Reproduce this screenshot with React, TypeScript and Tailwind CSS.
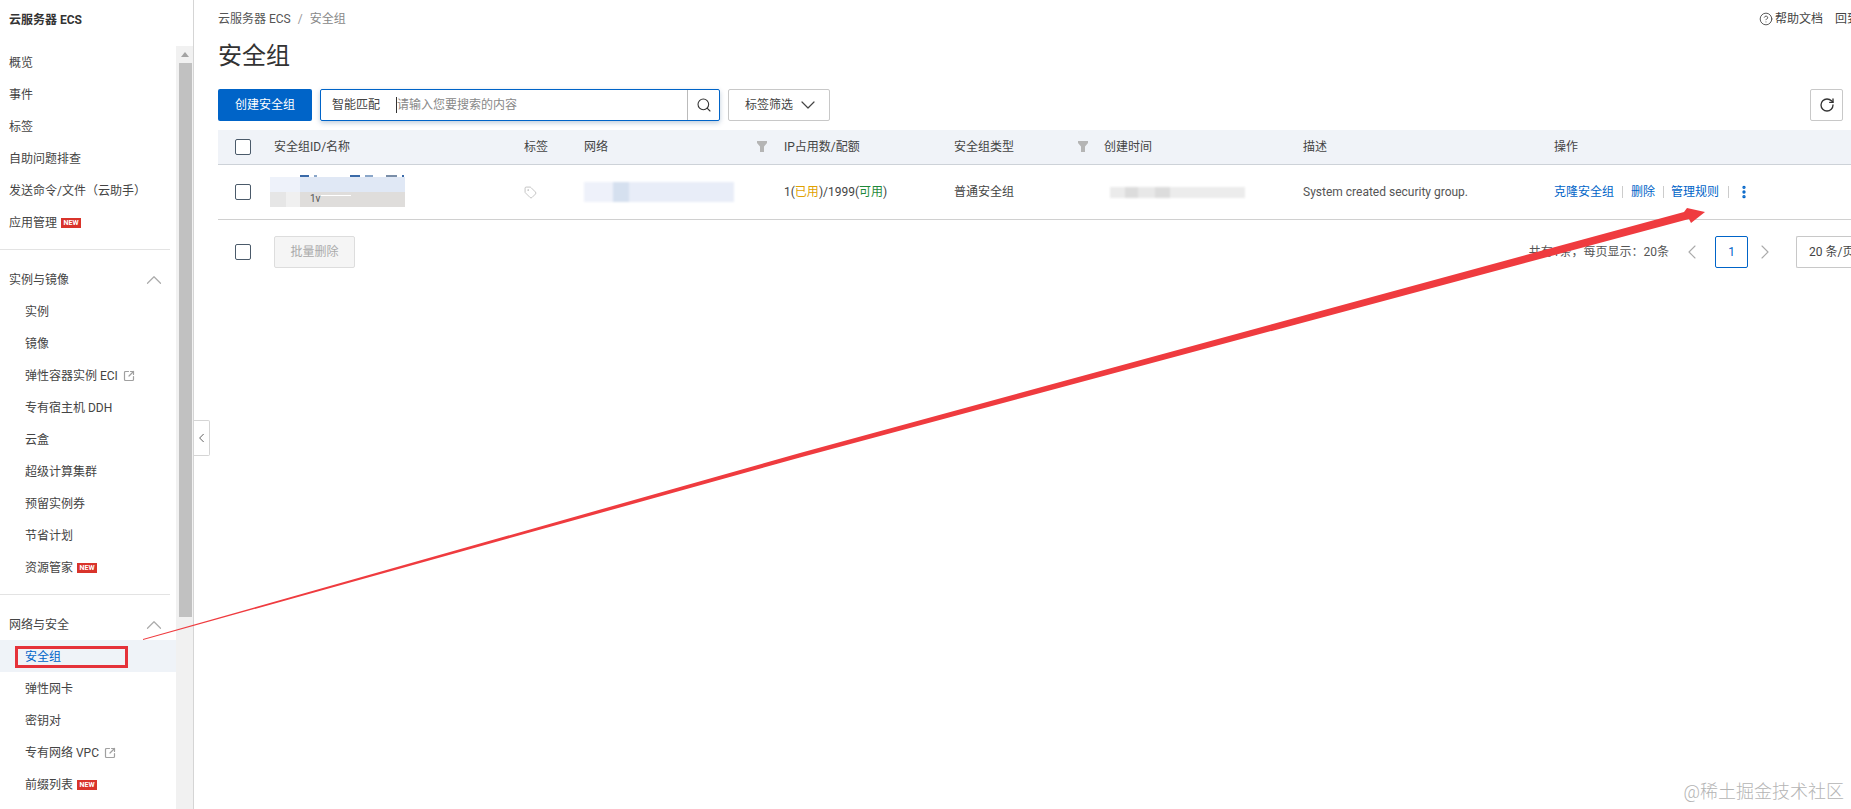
import { ChevronUp, ChevronDown, ChevronLeft, ChevronRight, Search, RotateCw, Tag, CircleHelp, SquareArrowOutUpRight, EllipsisVertical } from "lucide-react";

const Badge = () => (
  <span className="ml-[4px] inline-flex h-[10px] w-[20px] items-center justify-center bg-[#d9342b] text-[7px] font-bold leading-none text-white">NEW</span>
);
const Ext = () => <SquareArrowOutUpRight className="ml-[5px] h-[12px] w-[12px] text-[#a0a0a0]" strokeWidth={2.4} />;

function Item({ label, sub, badge, ext, active }: { label: string; sub?: boolean; badge?: boolean; ext?: boolean; active?: boolean }) {
  return (
    <div className={`flex h-[32px] items-center pt-[2px] ${sub ? "pl-[25px]" : "pl-[9px]"} ${active ? "bg-[#eff3f8] text-[#0064c8]" : "text-[#444444]"}`}>
      <span>{label}</span>
      {badge && <Badge />}
      {ext && <Ext />}
    </div>
  );
}

const Section = ({ label }: { label: string }) => (
  <div className="flex h-[32px] items-center justify-between pl-[9px] pr-[9px] pt-[2px] text-[#444444]">
    <span>{label}</span>
    <ChevronUp className="h-[26px] w-[26px] text-[#aaaaaa]" strokeWidth={1.1} />
  </div>
);

const Funnel = () => (
  <svg width="10" height="12" viewBox="0 0 10 12" className="shrink-0">
    <path d="M0 0h10v2L7 5.5V11H3V5.5L0 2z" fill="#b5b5b5" />
  </svg>
);

const Box = () => <span className="block h-[16px] w-[16px] rounded-[2px] border border-[#4a5a6a] bg-white" />;

const grid = "grid grid-cols-[56px_250px_60px_200px_170px_150px_199px_251px_1fr] items-center";

export default function App() {
  return (
    <div className="relative flex h-[809px] w-[1851px] overflow-hidden bg-white text-[12px] text-[#333333] [font-family:'Roboto','Noto_Sans_CJK_SC',sans-serif]">
      {/* sidebar */}
      <aside className="flex w-[194px] shrink-0 flex-col border-r border-[#d5d5d5]">
        <div className="flex h-[46px] shrink-0 items-start pl-[9px] pt-[11px] font-bold text-[#333333]">云服务器 ECS</div>
        <div className="flex min-h-0 flex-1">
          <nav className="w-[176px] shrink-0">
            <Item label="概览" />
            <Item label="事件" />
            <Item label="标签" />
            <Item label="自助问题排查" />
            <Item label="发送命令/文件（云助手）" />
            <Item label="应用管理" badge />
            <div className="mb-[13px] mt-[11px] h-px w-[170px] bg-[#e3e3e3]" />
            <Section label="实例与镜像" />
            <Item sub label="实例" />
            <Item sub label="镜像" />
            <Item sub label="弹性容器实例 ECI" ext />
            <Item sub label="专有宿主机 DDH" />
            <Item sub label="云盒" />
            <Item sub label="超级计算集群" />
            <Item sub label="预留实例券" />
            <Item sub label="节省计划" />
            <Item sub label="资源管家" badge />
            <div className="mb-[13px] mt-[11px] h-px w-[170px] bg-[#e3e3e3]" />
            <Section label="网络与安全" />
            <Item sub active label="安全组" />
            <Item sub label="弹性网卡" />
            <Item sub label="密钥对" />
            <Item sub label="专有网络 VPC" ext />
            <Item sub label="前缀列表" badge />
          </nav>
          <div className="flex w-[17px] shrink-0 flex-col items-center bg-[#f1f1f1] pl-[1px]">
            <div className="flex h-[17px] w-full items-center justify-center">
              <span className="h-0 w-0 border-x-[4px] border-b-[5px] border-x-transparent border-b-[#a3a3a3]" />
            </div>
            <div className="h-[554px] w-[13px] bg-[#c1c1c1]" />
          </div>
        </div>
      </aside>

      {/* main */}
      <main className="min-w-0 flex-1 pl-[24px]">
        <div className="flex h-[38px] items-center justify-between">
          <div className="flex items-center text-[#555555]">
            <span>云服务器 ECS</span>
            <span className="mx-[7px] text-[#999999]">/</span>
            <span className="text-[#888888]">安全组</span>
          </div>
          <div className="flex w-[92px] shrink-0 items-center overflow-hidden whitespace-nowrap text-[#444444]">
            <CircleHelp className="mr-[2px] h-[14px] w-[14px] shrink-0" strokeWidth={1.5} />
            <span>帮助文档</span>
            <span className="ml-[12px]">回到</span>
          </div>
        </div>
        <h1 className="flex h-[36px] items-center text-[24px] font-normal leading-none text-[#333333]">安全组</h1>
        <div className="mt-[15px] flex h-[32px] items-stretch">
          <button className="w-[94px] rounded-[2px] bg-[#0064c8] text-white">创建安全组</button>
          <div className="ml-[8px] flex w-[400px] items-center rounded-[2px] border border-[#0064c8] shadow-[0_2px_5px_rgba(0,60,120,0.25)]">
            <span className="w-[75px] pl-[11px] text-[#444444]">智能匹配</span>
            <span className="h-[16px] w-px bg-[#333333]" />
            <span className="flex-1 text-[#888888]">请输入您要搜索的内容</span>
            <span className="flex h-full w-[32px] items-center justify-center border-l border-[#bbbbbb]">
              <Search className="h-[16px] w-[16px] text-[#333333]" strokeWidth={1.6} />
            </span>
          </div>
          <div className="ml-[8px] flex w-[102px] items-center rounded-[2px] border border-[#c8c8c8] pl-[16px] text-[#444444]">
            标签筛选
            <ChevronDown className="ml-[3px] h-[24px] w-[24px]" strokeWidth={1.2} />
          </div>
          <div className="ml-auto mr-[8px] flex w-[33px] items-center justify-center rounded-[2px] border border-[#c8c8c8]">
            <RotateCw className="h-[16px] w-[16px] text-[#333333]" strokeWidth={2} />
          </div>
        </div>

        <div className={`${grid} mt-[9px] h-[35px] border-b border-[#cdd2d8] bg-[#f0f3f8] text-[#444444]`}>
          <div className="pl-[17px]"><Box /></div>
          <div>安全组ID/名称</div>
          <div>标签</div>
          <div className="flex items-center justify-between pr-[17px]"><span>网络</span><Funnel /></div>
          <div>IP占用数/配额</div>
          <div className="flex items-center justify-between pr-[16px]"><span>安全组类型</span><Funnel /></div>
          <div>创建时间</div>
          <div>描述</div>
          <div>操作</div>
        </div>

        <div className={`${grid} h-[55px] border-b border-[#d0d0d0]`}>
          <div className="pl-[17px]"><Box /></div>
          <div className="relative -ml-[4px] w-[135px]">
            <div className="absolute -top-[2px] left-[30px] flex gap-[5px] blur-[0.4px]">
              <span className="h-[2px] w-[9px] bg-[#3a6aa8]" />
              <span className="h-[2px] w-[3px] bg-[#8aa6c8]" />
              <span className="ml-[28px] h-[2px] w-[10px] bg-[#3a6aa8]" />
              <span className="h-[2px] w-[8px] bg-[#8aa6c8]" />
              <span className="ml-[8px] h-[2px] w-[11px] bg-[#7a8ea8]" />
              <span className="h-[2px] w-[2px] bg-[#3a6aa8]" />
            </div>
            <div className="flex h-[15px]">
              <div className="w-[30px] bg-[#eef2fa]" />
              <div className="flex-1 bg-[#e0e8f5]" />
            </div>
            <div className="flex h-[15px]">
              <div className="w-[16px] bg-[#e6e6e6]" />
              <div className="w-[14px] bg-[#f0f0f0]" />
              <div className="flex flex-1 items-start bg-[#dfdddb] pl-[10px] text-[10px] leading-[14px] text-[#555555]">
                1v<span className="ml-[1px] mt-[3px] h-[1px] w-[30px] bg-white" />
              </div>
            </div>
          </div>
          <div><Tag className="h-[13px] w-[13px] text-[#b8b8b8]" strokeWidth={1.5} /></div>
          <div className="flex h-[20px] w-[150px] blur-[1px]">
            <div className="w-[29px] bg-[#eef1fa]" />
            <div className="w-[16px] bg-[#d5e0ef]" />
            <div className="flex-1 bg-[#e8edf8]" />
          </div>
          <div className="whitespace-nowrap text-[#444444]">
            1(<span className="text-[#e0a100]">已用</span>)/1999(<span className="text-[#1f8a3a]">可用</span>)
          </div>
          <div className="text-[#444444]">普通安全组</div>
          <div className="flex h-[11px] w-[135px] translate-x-[6px] blur-[1px]">
            <div className="w-[15px] bg-[#ebebeb]" />
            <div className="w-[13px] bg-[#dcdcdc]" />
            <div className="w-[17px] bg-[#e8e8e8]" />
            <div className="w-[15px] bg-[#dcdcdc]" />
            <div className="flex-1 bg-[#ececec]" />
          </div>
          <div className="text-[#555555]">System created security group.</div>
          <div className="flex items-center text-[#0064c8]">
            <span>克隆安全组</span>
            <span className="mx-[8px] h-[12px] w-px bg-[#cccccc]" />
            <span>删除</span>
            <span className="ml-[8px] mr-[7px] h-[12px] w-px bg-[#cccccc]" />
            <span>管理规则</span>
            <span className="ml-[9px] mr-[7px] h-[12px] w-px bg-[#cccccc]" />
            <EllipsisVertical className="h-[16px] w-[16px]" strokeWidth={3} />
          </div>
        </div>

        <div className="mt-[16px] flex h-[32px] items-center">
          <div className="w-[56px] pl-[17px]"><Box /></div>
          <button className="h-[32px] w-[81px] rounded-[2px] border border-[#dddddd] bg-[#f5f5f5] text-[#aaaaaa]">批量删除</button>
          <div className="ml-auto flex items-center">
            <span className="text-[#555555]">共有1条，每页显示：20条</span>
            <ChevronLeft className="ml-[11px] h-[24px] w-[24px] text-[#aaaaaa]" strokeWidth={1.1} />
            <span className="ml-[11px] flex h-[32px] w-[33px] items-center justify-center rounded-[2px] border border-[#0064c8] text-[#0064c8]">1</span>
            <ChevronRight className="ml-[5px] h-[24px] w-[24px] text-[#aaaaaa]" strokeWidth={1.1} />
            <span className="ml-[19px] flex h-[32px] w-[55px] items-center overflow-hidden whitespace-nowrap rounded-l-[2px] border-y border-l border-[#c8c8c8] pl-[12px] text-[#444444]">20 条/页</span>
          </div>
        </div>
      </main>

      {/* collapse handle */}
      <div className="absolute left-[194px] top-[420px] flex h-[36px] w-[16px] items-center justify-center rounded-r-[2px] border border-l-0 border-[#d5d5d5] bg-white">
        <ChevronLeft className="h-[16px] w-[16px] text-[#555555]" strokeWidth={1.5} />
      </div>

      {/* annotation */}
      <div className="absolute left-[15px] top-[646px] h-[22px] w-[113px] border-[3px] border-[#e5323a]" />
      <svg className="pointer-events-none absolute left-0 top-0" width="1851" height="809" viewBox="0 0 1851 809">
        <polygon points="143,639 800,453 1684,212 1687,208 1705,212 1691,223 1689,219 800,457.5 143,640" fill="#ef3b3f" />
      </svg>

      {/* watermark */}
      <div className="absolute bottom-[6px] right-[7px] text-[18px] font-light leading-[22px] text-[#b4b4b4]">@稀土掘金技术社区</div>
    </div>
  );
}
